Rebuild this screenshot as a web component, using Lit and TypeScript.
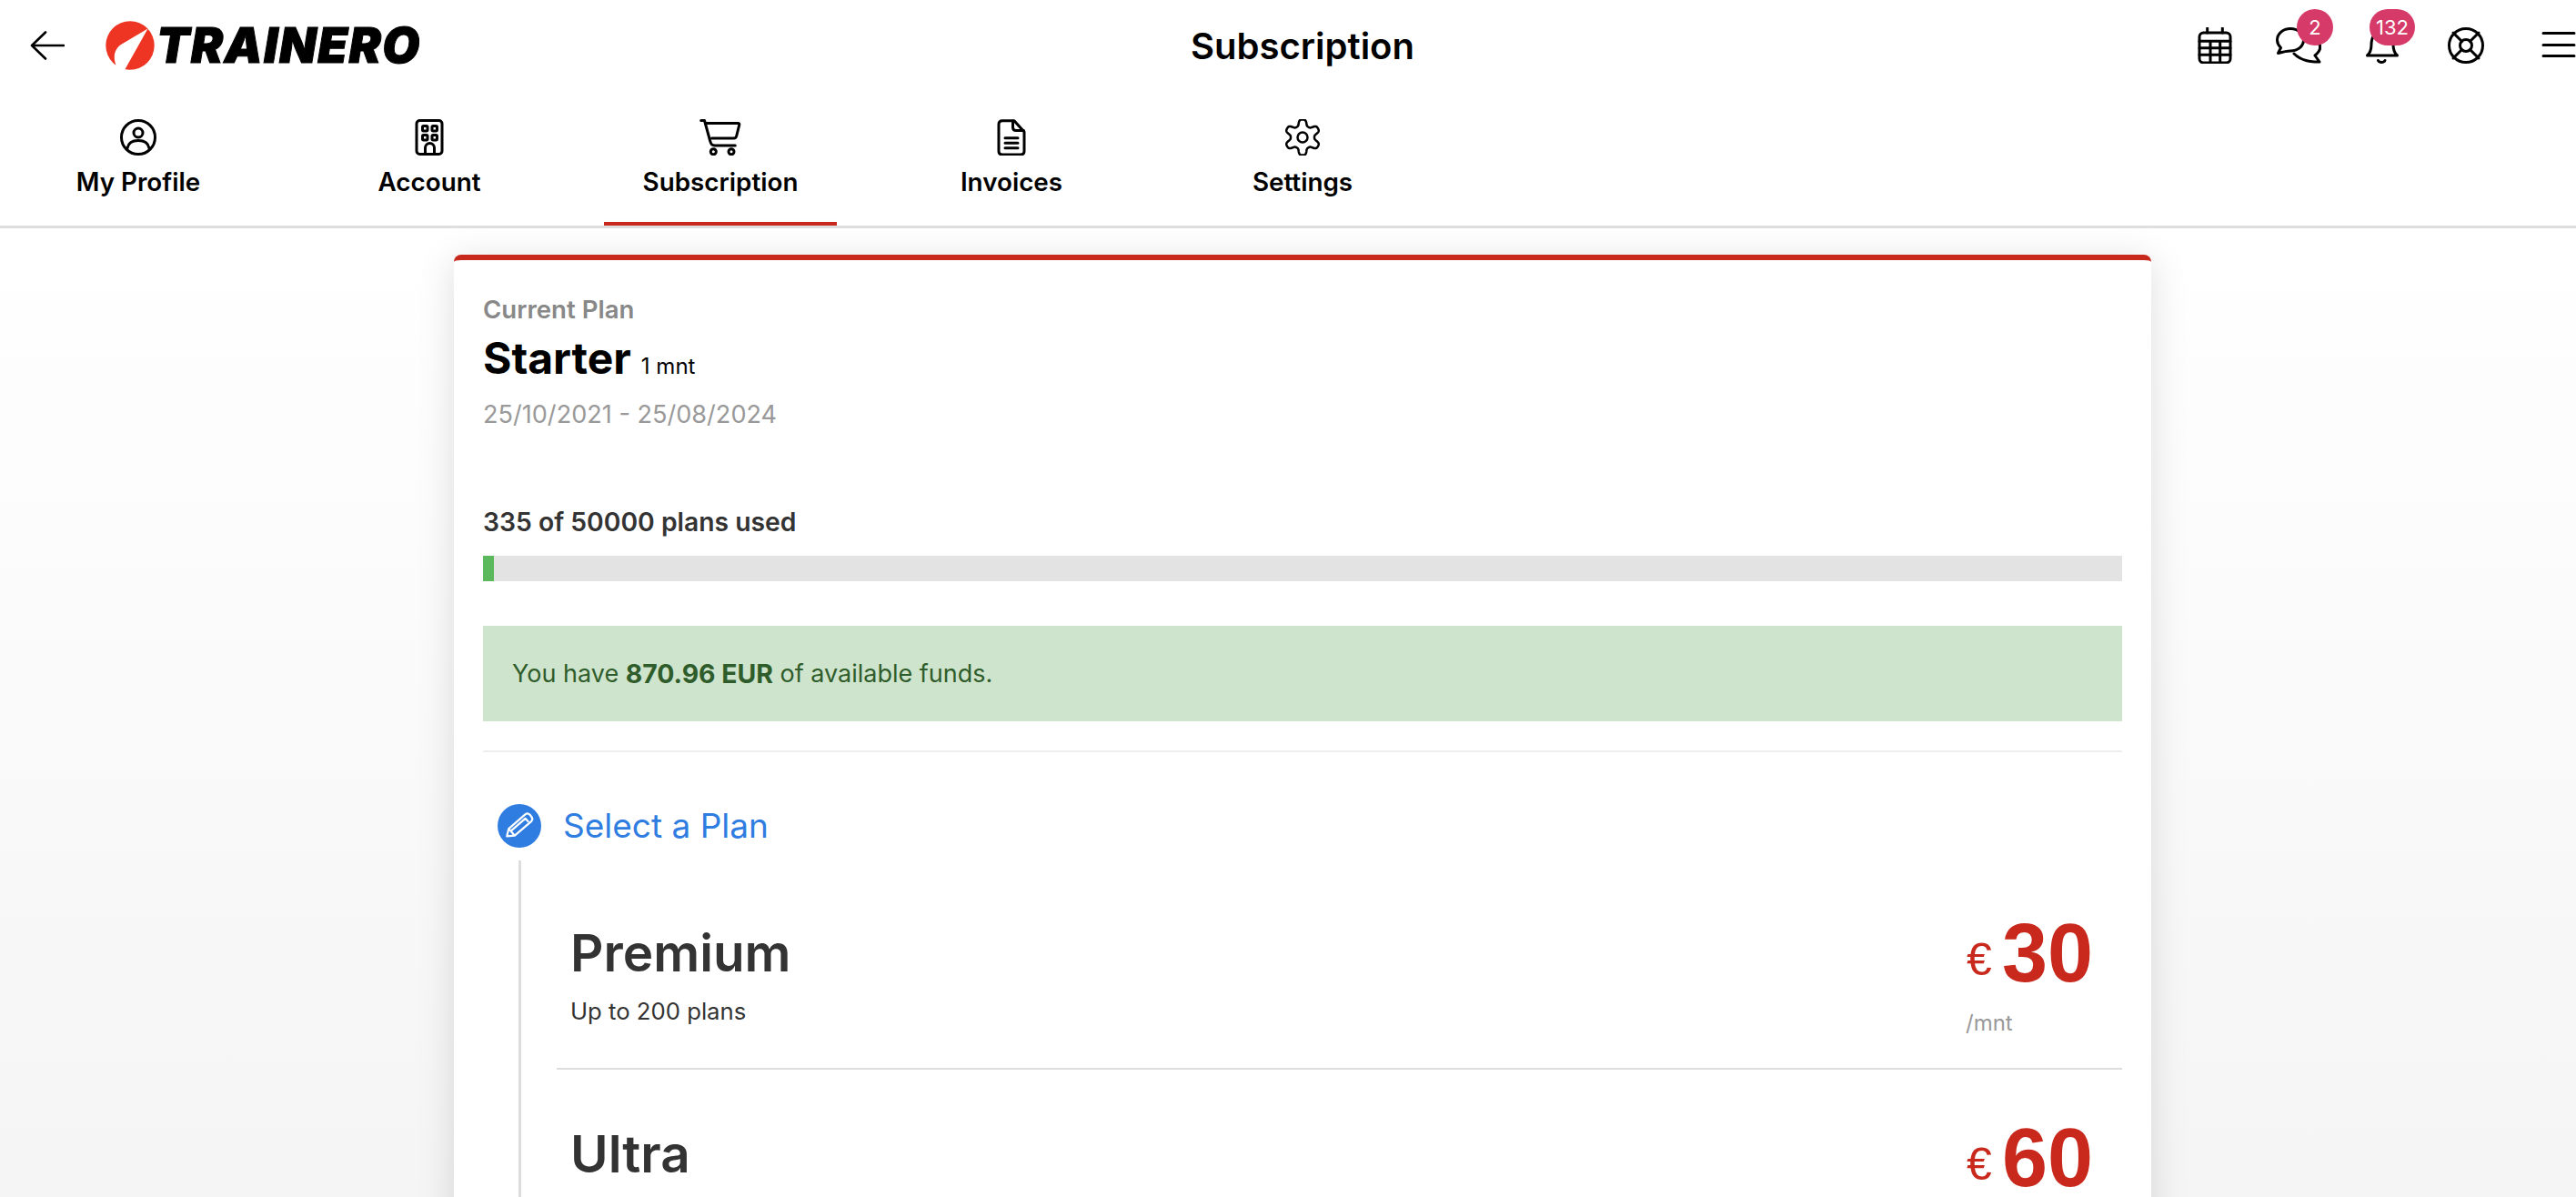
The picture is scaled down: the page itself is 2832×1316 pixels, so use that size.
import { LitElement, html, css, svg } from "lit";
import { customElement } from "lit/decorators.js";

function gearPath() {
  const pts: string[] = [];
  const n = 144;
  const k = 1.7;
  for (let i = 0; i < n; i++) {
    const t = (i / n) * Math.PI * 2;
    const r = 16.3 + (3.3 * Math.tanh(k * Math.cos(6 * t))) / Math.tanh(k);
    const x = 20 + r * Math.sin(t);
    const y = 20 - r * Math.cos(t);
    pts.push(`${x.toFixed(2)} ${y.toFixed(2)}`);
  }
  return "M" + pts.join("L") + "Z";
}

const I = {
  profile: svg`<circle cx="20" cy="20" r="18.5"/><circle cx="20" cy="15" r="5"/><path d="M8 32c1-6 6-8.500 12-8.500s11 2.500 12 8.500"/>`,
  building: svg`<rect x="6" y="1.500" width="28" height="37" rx="3.500"/><rect x="12.500" y="7.500" width="5.500" height="5.500" rx="1.200"/><rect x="23" y="7.500" width="5.500" height="5.500" rx="1.200"/><rect x="12.500" y="17.500" width="5.500" height="5.500" rx="1.200"/><rect x="23" y="17.500" width="5.500" height="5.500" rx="1.200"/><path d="M15.500 38v-6.500a5 5 0 0 1 10 0V38"/>`,
  cart: svg`<path d="M1.700 1.500H5.500L11.700 24c.8 3.500 2.300 5 5 5h22.600"/><path d="M7 4.500h35.500c1 0 1.500.7 1.300 1.700L40.700 18.500c-.4 1.800-1.400 2.500-3 2.500H13.500"/><circle cx="15.300" cy="35.700" r="3"/><circle cx="35" cy="35.700" r="3"/>`,
  doc: svg`<path d="M10 1.700h13L34 14v21c0 2.700-1.300 4-4 4H10c-2.700 0-4-1.300-4-4V5.700c0-2.700 1.300-4 4-4z"/><path d="M21.500 2v7c0 2.500 1 3.500 3.500 3.500h8.500"/><path d="M13 20.700h14M13 26.200h14M13 31.700h14"/>`,
  gear: svg`<path stroke-width="2.500" d=${gearPath()}/><circle stroke-width="2.500" cx="20" cy="20" r="5.500"/>`,
  calendar: svg`<rect x="3" y="6" width="34" height="33" rx="4.500"/><path d="M11.700 1v5M28.300 1v5M3 15.300h34M3 22.700h34M3 30.300h34M15 15.300V39M25.700 15.300V39"/>`,
  chat: svg`<path d="M2.500 28.500 5.500 22.500C2.500 19.500 1.500 16.500 1.500 14 1.500 7 8 1.500 16 1.500S30.500 7 30.500 14 24 26 16 26C12 26 8 27 2.500 28.500Z"/><path d="M20 29C28 37 38 38 48 38L43 31C49 26 50 21 47 17"/>`,
  bell: svg`<path d="M3.500 31C7 28 8 25 8 19 8 10 13 4 20 4S32 10 32 19C32 25 33 28 36.500 31Z"/><path d="M15.500 36.500C16.500 39 22 39 23 36.500"/>`,
  buoy: svg`<circle cx="20" cy="20" r="18.500"/><circle cx="20" cy="20" r="6.500"/><path d="M15.500 15.500 6 6M24.500 15.500 34 6M15.500 24.500 6 34M24.500 24.500 34 34"/>`,
  menu: svg`<path d="M3 6.500h34M3 19.500h34M3 31.500h34"/>`,
  back: svg`<path d="M2 20h35M17 5.500 2 20 17 34.500"/>`,
};

const tabs: [string, any, number, boolean][] = [
  ["My Profile", I.profile, 40, false],
  ["Account", I.building, 40, false],
  ["Subscription", I.cart, 46, true],
  ["Invoices", I.doc, 40, false],
  ["Settings", I.gear, 40, false],
];

const plans = [
  { name: "Premium", sub: "Up to 200 plans", price: "30", per: "/mnt" },
  { name: "Ultra", sub: "", price: "60", per: "" },
];

@customElement("app-root")
export class AppRoot extends LitElement {
  static styles = css`
    :host { display: block; width: 2832px; height: 1316px; overflow: hidden; font-family: Inter, "Liberation Sans", sans-serif; color: #000; }
    * { box-sizing: border-box; }
    .page { width: 2864px; height: 1316px; overflow: hidden; display: flex; flex-direction: column; background: #fff; }
    .ico { fill: none; stroke: #000; stroke-width: 3; stroke-linecap: round; stroke-linejoin: round; display: block; flex: none; }
    .header { display: grid; grid-template-columns: 1fr auto 1fr; align-items: center; height: 100px; flex: none; }
    .left { display: flex; align-items: center; padding-left: 33px; }
    .back { stroke-width: 2.6; }
    .logo { display: flex; align-items: center; margin-left: 45px; }
    .wordmark { font-size: 53px; font-weight: 900; font-style: italic; letter-spacing: 1.4px; margin-left: 2px; line-height: 1; -webkit-text-stroke: 1px #000; }
    .title { font-size: 40px; font-weight: 600; line-height: 50px; padding-top: 2px; }
    .right { display: flex; align-items: center; justify-content: flex-end; gap: 52px; padding-right: 31px; }
    .right .menu { margin-left: 10px; }
    .hi { position: relative; height: 40px; flex: none; display: block; }
    .chat { margin: 0 -5px; }
    .badge { position: absolute; top: -20px; height: 40px; min-width: 40px; border-radius: 20px; background: #d63a68; color: #fff; font-size: 22px; display: flex; align-items: center; justify-content: center; padding: 0 7px; }
    .chat .badge { left: 23px; }
    .bell .badge { left: 6px; }
    .tabs { display: flex; gap: 64px; padding-left: 24px; height: 151px; border-bottom: 3px solid #dedede; flex: none; }
    .tab { width: 256px; height: 148px; display: flex; flex-direction: column; align-items: center; padding-top: 31px; font-size: 27.8px; font-weight: 600; position: relative; }
    .tab span { margin-top: 11px; line-height: 36px; }
    .tab.on::after { content: ""; position: absolute; left: 0; right: 0; bottom: 0; height: 4px; background: #c9291d; }
    .main { flex: 1; padding: 29px 499px 0; background: linear-gradient(#fff, #f3f3f3); }
    .card { background: #fff; border-top: 6px solid #c9291d; border-radius: 8px 8px 0 0; padding: 36px 32px 0; box-shadow: 0 6px 40px rgba(0,0,0,.13); height: 1200px; }
    .cur { font-size: 27.6px; font-weight: 600; color: #888; line-height: 36px; }
    .plan { display: flex; align-items: baseline; gap: 11px; line-height: 60px; margin-top: 6px; }
    .plan b { font-size: 48px; font-weight: 700; }
    .plan span { font-size: 24px; }
    .dates { font-size: 27.1px; color: #999; line-height: 36px; margin-top: 5px; }
    .used { font-size: 28.3px; font-weight: 600; color: #333; line-height: 36px; margin-top: 82px; }
    .bar { height: 28px; background: #e3e3e3; margin-top: 19px; }
    .bar i { display: block; height: 100%; background: #5cb85c; }
    .alert { height: 105px; margin-top: 49px; padding: 0 32px; background: #cfe4cc; color: #2f5c2b; font-size: 27px; display: flex; align-items: center; gap: .28em; }
    .alert b { font-weight: 700; font-size: 28.4px; }
    hr { border: 0; height: 2px; background: #eee; margin: 32px 0 0; }
    .step { display: flex; align-items: center; gap: 24px; margin: 57px 0 0 16px; }
    .pencil { width: 48px; height: 48px; flex: none; display: block; }
    .pencil circle { fill: #2f7de1; }
    .pencil path { fill: none; stroke: #fff; stroke-width: 2.2; stroke-linejoin: round; stroke-linecap: round; }
    .step span { font-size: 37px; color: #2f7de1; line-height: 48px; }
    .list { margin: 14px 0 0 39px; border-left: 3px solid #ddd; padding: 5px 0 0 39px; }
    .row { display: flex; justify-content: space-between; height: 225px; border-bottom: 2px solid #dcdcdc; }
    .row:last-child { border-bottom: 0; }
    .info { padding: 59px 0 0 15px; }
    .row:first-child .info { padding-top: 63px; }
    .name { font-size: 56.6px; font-weight: 600; color: #333; line-height: 68px; }
    .sub { font-size: 25.7px; color: #333; line-height: 32px; margin-top: 14px; }
    .price { width: 172px; padding: 55px 32px 0 0; }
    .amount { display: flex; justify-content: flex-end; align-items: baseline; gap: 11px; color: #c9291d; font-family: "Liberation Sans", Arial, sans-serif; line-height: 84px; }
    .amount span { font-size: 50px; transform: translateY(-7px); }
    .amount b { font-size: 90px; font-weight: 700; }
    .per { font-size: 24px; color: #999; line-height: 30px; margin-top: 6px; }
  `;

  render() {
    return html`<div class="page">
      <header class="header">
        <div class="left">
          <svg class="ico back" width="38" height="40" viewBox="0 0 38 40">${I.back}</svg>
          <div class="logo">
            <svg width="54" height="54" viewBox="-27 -27 54 54">
              <circle r="26.700" fill="#ee3524"/>
              <path fill="#fff" d="M19.500-18.500-5.700 26.500-8 30H-20L-15.700 21C-19 12-17 4-10-1Z"/>
            </svg>
            <span class="wordmark">TRAINERO</span>
          </div>
        </div>
        <div class="title">Subscription</div>
        <div class="right">
          <svg class="ico hi" width="40" height="40" viewBox="0 0 40 40">${I.calendar}</svg>
          <div class="hi chat" style="width:50px">
            <svg class="ico" width="50" height="40" viewBox="0 0 50 40">${I.chat}</svg>
            <div class="badge">2</div>
          </div>
          <div class="hi bell" style="width:40px">
            <svg class="ico" width="40" height="40" viewBox="0 0 40 40">${I.bell}</svg>
            <div class="badge">132</div>
          </div>
          <svg class="ico hi" width="40" height="40" viewBox="0 0 40 40">${I.buoy}</svg>
          <svg class="ico hi menu" width="40" height="40" viewBox="0 0 40 40">${I.menu}</svg>
        </div>
      </header>
      <nav class="tabs">
        ${tabs.map(([label, icon, w, on]) => html`<div class="tab ${on ? "on" : ""}">
          <svg class="ico" width=${w} height="40" viewBox="0 0 ${w} 40">${icon}</svg>
          <span>${label}</span>
        </div>`)}
      </nav>
      <main class="main">
        <section class="card">
          <div class="cur">Current Plan</div>
          <div class="plan"><b>Starter</b><span>1 mnt</span></div>
          <div class="dates">25/10/2021 - 25/08/2024</div>
          <div class="used">335 of 50000 plans used</div>
          <div class="bar"><i style="width:${(12 / 1802) * 100}%"></i></div>
          <div class="alert"><span>You have</span><b>870.96 EUR</b><span>of available funds.</span></div>
          <hr />
          <div class="step">
            <svg class="pencil" viewBox="0 0 48 48">
              <circle cx="24" cy="24" r="24"/>
              <path d="M10.300 35.300 12.300 27.100 30.700 11.200Q33 9.300 35.300 11.500L37.300 14Q39.300 16.800 37.300 18.800L18.900 34.700ZM15.500 28.800 30.500 15.800 33.500 19M12.300 27.100 18.900 34.700"/>
            </svg>
            <span>Select a Plan</span>
          </div>
          <div class="list">
            ${plans.map((p) => html`<div class="row">
              <div class="info">
                <div class="name">${p.name}</div>
                ${p.sub ? html`<div class="sub">${p.sub}</div>` : ""}
              </div>
              <div class="price">
                <div class="amount"><span>€</span><b>${p.price}</b></div>
                ${p.per ? html`<div class="per">${p.per}</div>` : ""}
              </div>
            </div>`)}
          </div>
        </section>
      </main>
    </div>`;
  }
}
